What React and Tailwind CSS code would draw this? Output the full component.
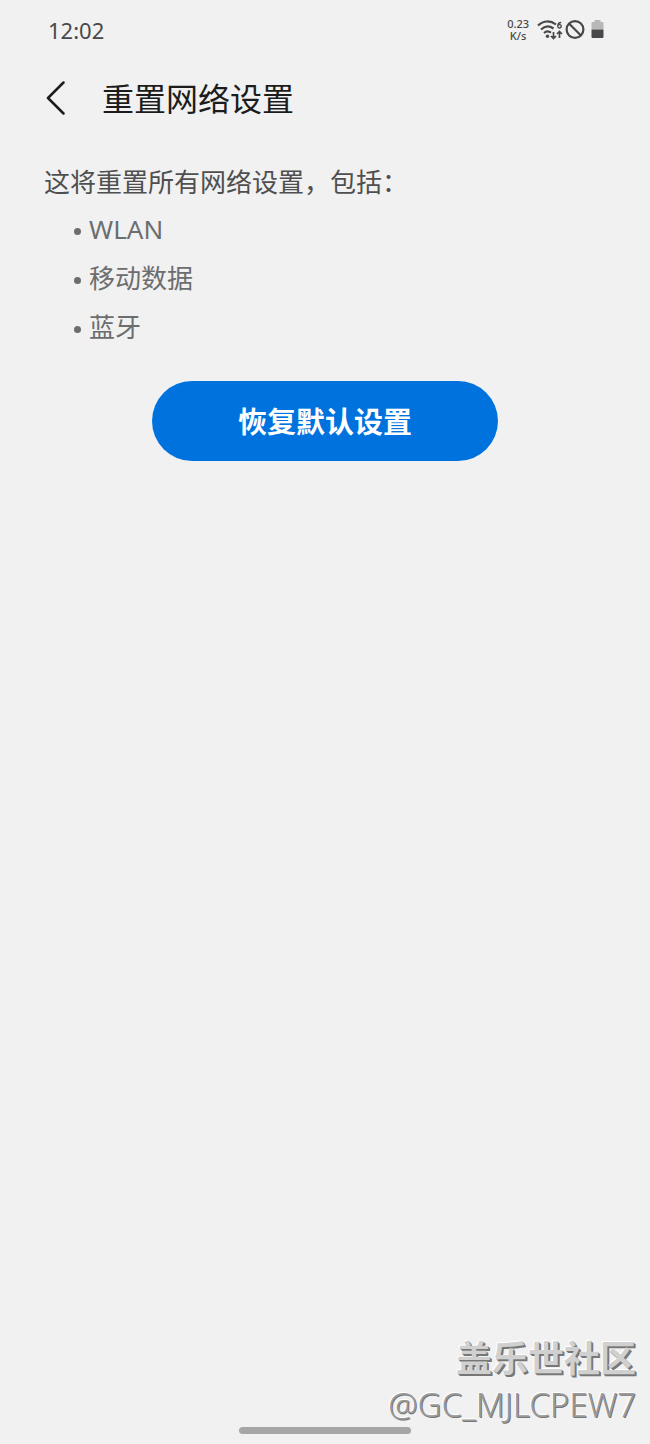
import React from 'react';

const resetItems = ['WLAN', '移动数据', '蓝牙'];

const StatusIcons = () => (
  <div className="flex items-center text-[#48484a]">
    <div className="mr-2 text-center text-[11px] leading-3 font-medium">
      0.23
      <br />
      K/s
    </div>
    {/* Wi-Fi 6 with traffic arrows */}
    <svg width="28" height="22" viewBox="0 0 28 22" fill="none" stroke="currentColor" strokeWidth="2.200" aria-hidden="true">
      <path d="M1 6.500C6.500 1.300 13.500 1.300 19 5.500" />
      <path d="M4 10.500C8 6.600 12.500 6.600 16.500 9.500" />
      <path d="M7 14C9.200 12 11.800 12 14 13.700" />
      <circle cx="10.500" cy="17.300" r="1.700" fill="currentColor" stroke="none" />
      <path d="M16.500 13v6.500M14 17l2.500 2.500l2.500-2.500M22.500 19v-6.500M20 15l2.500-2.500l2.500 2.500" strokeWidth="1.700" />
      <path d="M24.200 3.500c-2.400 0-3.400 1.500-3.400 3.700M20.800 7.300a1.700 1.700 0 1 0 3.400 0a1.700 1.700 0 1 0-3.400 0" strokeWidth="1.400" />
    </svg>
    <svg width="20" height="20" viewBox="0 0 20 20" fill="none" stroke="currentColor" strokeWidth="2.200" aria-hidden="true">
      <circle cx="10" cy="9.500" r="8.400" />
      <path d="M4 3.500l12 12" />
    </svg>
    <svg className="ml-1.5" width="13" height="20" viewBox="0 0 13 20" aria-hidden="true">
      <path d="M3.500 0h6v2h2a1 1 0 0 1 1 1v6.500H.5V3a1 1 0 0 1 1-1h2z" fill="#b8b8b8" />
      <path d="M.5 9.500h12V17a1 1 0 0 1-1 1h-10a1 1 0 0 1-1-1z" fill="currentColor" />
    </svg>
  </div>
);

const App = () => {
  return (
    <div
      lang="zh-CN"
      className="relative flex min-h-screen flex-col bg-[#f1f1f1] font-['Noto_Sans','Noto_Sans_CJK_SC',sans-serif]"
    >
      {/* Status bar */}
      <div className="flex h-15 items-center justify-between pr-[46px] pl-12">
        <span className="text-[22px] text-[#48484a]">12:02</span>
        <StatusIcons />
      </div>

      <header className="flex h-[76px] items-center gap-9 pl-[46px]">
        <button type="button" aria-label="返回" className="text-[#1c1c1c]">
          <svg width="20" height="34" viewBox="0 0 20 34" fill="none" stroke="currentColor" strokeWidth="2.500" strokeLinecap="round" strokeLinejoin="round">
            <path d="M17.500 1.500L2 17l15.500 15.500" />
          </svg>
        </button>
        <h1 className="pt-0.5 text-[32px] leading-10 text-[#1c1c1c]">重置网络设置</h1>
      </header>

      <main className="px-11 pt-7">
        <p className="text-[26px] leading-9 text-[#4f4f4f]">这将重置所有网络设置，包括：</p>
        <ul className="mt-[11px] space-y-[13px] pl-[30px] text-[26px] leading-9 text-[#6c6d6f]">
          {resetItems.map((item) => (
            <li key={item} className="flex items-center gap-2">
              <span className="mt-1 size-[7px] rounded-full bg-[#6c6d6f]" />
              {item}
            </li>
          ))}
        </ul>
        <button
          type="button"
          className="mx-auto mt-9 block h-20 w-8/13 max-w-[346px] rounded-full bg-[#0072de] pt-0.5 text-[29px] font-bold text-white"
        >
          恢复默认设置
        </button>
      </main>

      <footer className="mt-auto pr-[14px] pb-4 text-right">
        <div className="text-[36px] leading-[46px] font-bold text-[#d0d0d0] [text-shadow:1px_1px_0_#777,2px_2px_0_#777,-1px_-1px_0_#fff]">
          盖乐世社区
        </div>
        <div className="text-[33px] leading-[46px] font-light text-[#9a9a9a] [text-shadow:1px_1px_0_#777,-1px_-1px_0_#fff]">
          @GC_MJLCPEW7
        </div>
      </footer>

      {/* Gesture bar */}
      <div className="absolute bottom-[10px] left-1/2 h-[7px] w-[172px] -translate-x-1/2 rounded-full bg-[#a6a6a6]" />
    </div>
  );
};

export default App;
